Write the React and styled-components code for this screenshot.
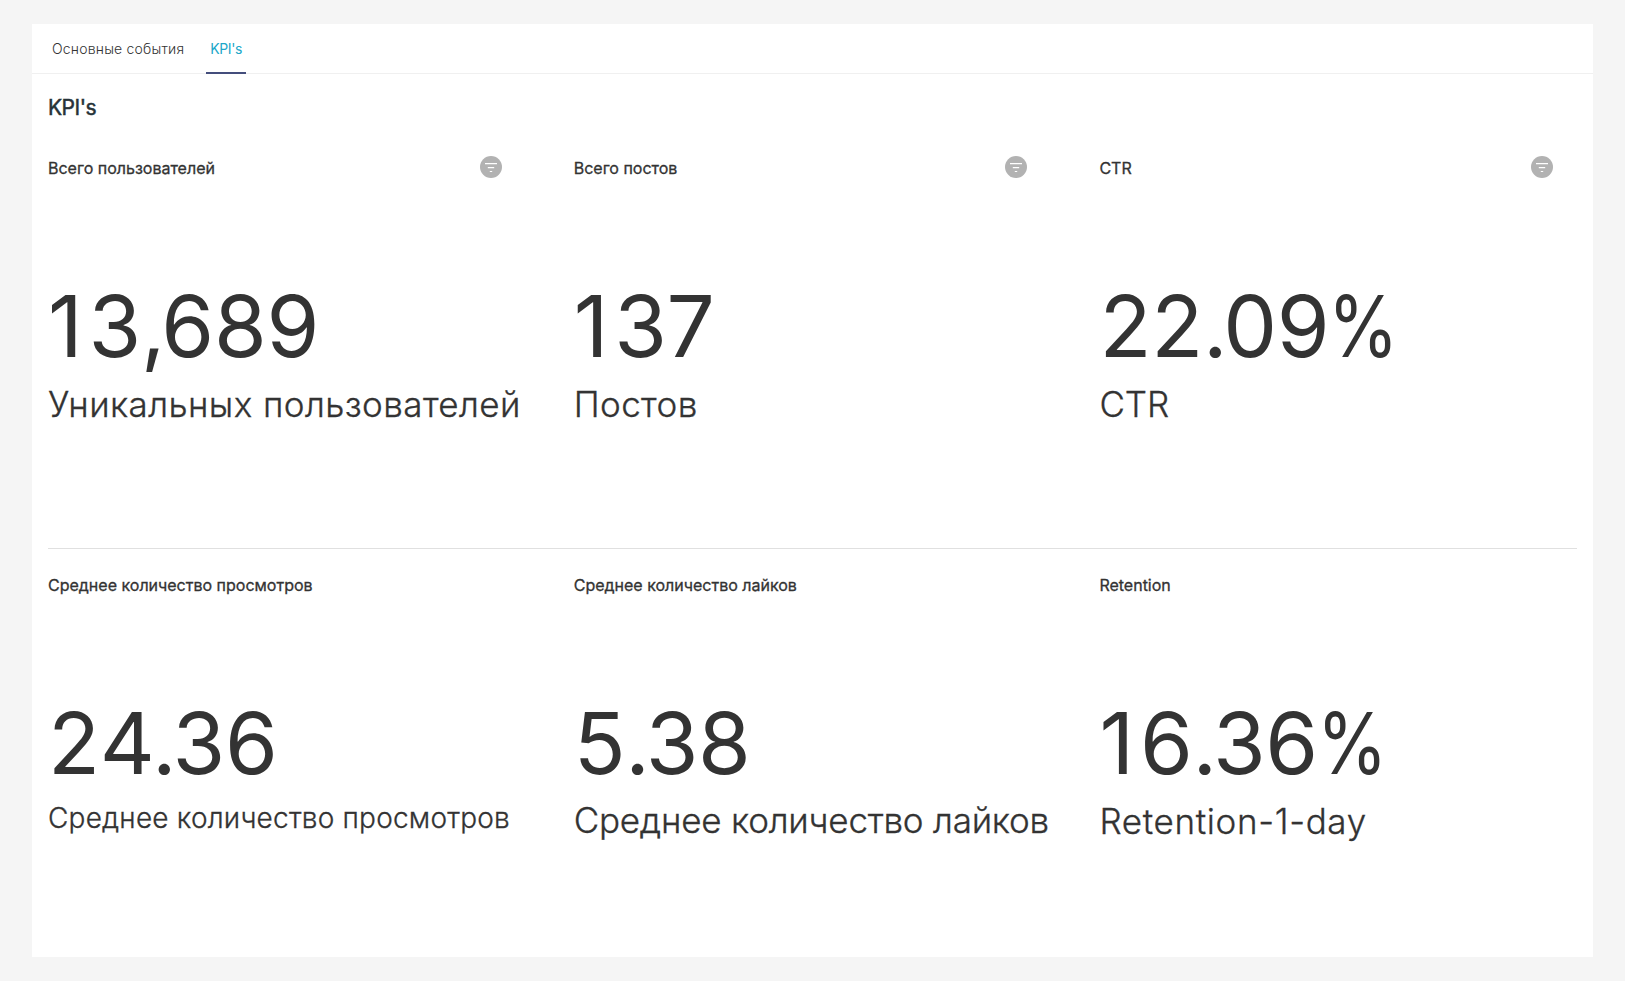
import React from "react";
import styled, { createGlobalStyle } from "styled-components";

const Global = createGlobalStyle`
  * { box-sizing: border-box; }
  html, body { margin: 0; background: #f5f5f5; }
  body { font-family: Inter, sans-serif; color: #333; height: 981px; overflow: hidden; padding: 24px 32px 0; }
`;
const Panel = styled.main`
  background: #fff;
  height: 933px;
`;
const Tabs = styled.nav`
  display: flex;
  height: 50px;
  border-bottom: 1px solid #f0f0f0;
  padding-left: 16px;
  gap: 18px;
`;
const Tab = styled.div`
  height: 50px;
  padding: 0 4px;
  line-height: 50px;
  font-size: 14px;
  font-weight: ${(p) => (p.$active ? 400 : 300)};
  letter-spacing: ${(p) => (p.$active ? -0.4 : 0.2)}px;
  color: ${(p) => (p.$active ? "#20a7c9" : "#333")};
  border-bottom: 2px solid ${(p) => (p.$active ? "#444e7c" : "transparent")};
`;
const Heading = styled.h1`
  margin: 0;
  padding: 21px 16px 0;
  height: 71px;
  font-size: 21px;
  line-height: 26px;
  font-weight: 400;
  letter-spacing: -0.5px;
  color: #263238;
  -webkit-text-stroke: 0.5px currentColor;
`;
const Row = styled.section`
  display: grid;
  grid-template-columns: repeat(3, 525.7px);
  margin: 0 16px;
  height: 404px;
  overflow: hidden;
  border-bottom: 1px solid ${(p) => (p.$line ? "#e0e0e0" : "transparent")};
`;
const Card = styled.article`
  white-space: nowrap;
  padding-top: ${(p) => p.$top}px;
`;
const CardTitle = styled.header`
  display: flex;
  justify-content: space-between;
  align-items: center;
  width: 453.7px;
  height: 24px;
  font-size: 16px;
  font-weight: 400;
  -webkit-text-stroke: 0.3px currentColor;
  svg { margin-bottom: 2px; }
`;
const Value = styled.div`
  margin-top: 102px;
  font-size: 85.33px;
  line-height: 88px;
  font-kerning: none;
  letter-spacing: -0.3px;
`;
const Glyph = styled.span`
  letter-spacing: ${(p) => p.$after}px;
`;
const Percent = styled.span`
  display: inline-block;
  transform: scaleX(0.84);
  transform-origin: left;
  margin-left: -1px;
`;
const Label = styled.div`
  margin-top: ${(p) => p.$top}px;
  font-size: ${(p) => p.$size}px;
  line-height: 44px;
  font-weight: 300;
  letter-spacing: ${(p) => p.$spacing}px;
  -webkit-text-stroke: 0.3px currentColor;
`;

const Filter = () => (
  <svg width="22" height="22" viewBox="0 0 22 22">
    <circle cx="11" cy="11" r="11" fill="#b2b2b2" />
    <path d="M5 7.7h12M7.8 11.7h6.4M9.8 15.5h2.4" stroke="#fff" strokeWidth="1.2" />
  </svg>
);

const top = [
  { title: "Всего пользователей", value: "13,689", label: "Уникальных пользователей", ls: 0.41 },
  { title: "Всего постов", value: "137", label: "Постов", ls: 0.4 },
  { title: "CTR", value: "22.09%", label: "CTR", ls: 0 },
];
const bottom = [
  { title: "Среднее количество просмотров", value: "24.36", label: "Среднее количество просмотров", size: 28, ls: 0.2, gap: 9 },
  { title: "Среднее количество лайков", value: "5.38", label: "Среднее количество лайков", ls: -0.22, gap: 11 },
  { title: "Retention", value: "16.36%", label: "Retention-1-day", ls: 0.65 },
];

const spacing = { 1: 5.8, 4: -2.8, ",": -4.2, ".": -4.2 };

const BigNumber = ({ text }) => (
  <Value>
    {[...text].map((c, i) => {
      if (c === "%") return <Percent key={i}>%</Percent>;
      if (spacing[c]) return <Glyph key={i} $after={spacing[c]}>{c}</Glyph>;
      return c;
    })}
  </Value>
);

const Kpi = ({ item, pad, filter }) => (
  <Card $top={pad}>
    <CardTitle>{item.title}{filter && <Filter />}</CardTitle>
    <BigNumber text={item.value} />
    <Label $top={item.gap || 12} $size={item.size || 35} $spacing={item.ls}>{item.label}</Label>
  </Card>
);

export default function App() {
  return (
    <>
      <Global />
      <Panel>
        <Tabs><Tab>Основные события</Tab><Tab $active>KPI's</Tab></Tabs>
        <Heading>KPI's</Heading>
        <Row $line>{top.map((i) => <Kpi key={i.title} item={i} pad={11} filter />)}</Row>
        <Row>{bottom.map((i) => <Kpi key={i.title} item={i} pad={24} />)}</Row>
      </Panel>
    </>
  );
}
